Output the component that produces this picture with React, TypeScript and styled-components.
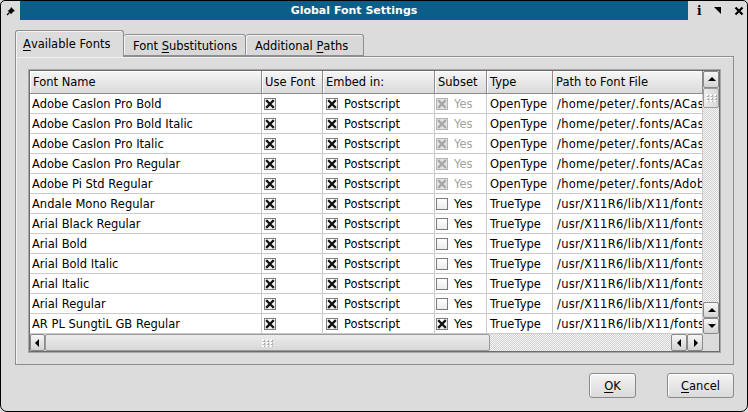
import React from 'react';
import styled, { createGlobalStyle } from 'styled-components';

const Global = createGlobalStyle`
  html, body { margin: 0; padding: 0; background: #dcdcdc; }
  body { font-family: "DejaVu Sans", "Liberation Sans", sans-serif; font-size: 11.5px; color: #000; }
  * { box-sizing: border-box; }
`;

const Window = styled.div`
  width: 748px;
  height: 412px;
  border: 1px solid #000;
  border-radius: 5px 5px 7px 7px;
  background: #dcdcdc;
  display: flex;
  flex-direction: column;
  overflow: hidden;
`;

const TitleBar = styled.div`
  height: 19px;
  display: flex;
  flex: none;
`;

const PinArea = styled.div`
  width: 19px;
  display: flex;
  align-items: center;
  justify-content: center;
`;

const TitleFill = styled.div`
  flex: 1;
  background: #0b5e87;
  color: #fff;
  font-weight: bold;
  font-size: 11px;
  display: flex;
  align-items: center;
  justify-content: center;
`;

const TitleButtons = styled.div`
  width: 59px;
  display: flex;
  align-items: center;
  justify-content: space-between;
  padding: 0 3px 0 9px;
`;

const InfoGlyph = styled.span`
  font-family: "DejaVu Serif", serif;
  font-weight: bold;
  font-size: 12px;
  line-height: 1;
`;

const Body = styled.div`
  flex: 1;
  display: flex;
  flex-direction: column;
  padding: 10px 13px 0 14px;
`;

const TabBar = styled.div`
  height: 26px;
  display: flex;
  align-items: flex-end;
  position: relative;
  z-index: 1;
`;

const Tab = styled.div<{ $active?: boolean; $w: number }>`
  width: ${(p) => p.$w}px;
  height: ${(p) => (p.$active ? 27 : 22)}px;
  margin-bottom: ${(p) => (p.$active ? -1 : 0)}px;
  border: 1px solid #8e8e8e;
  border-bottom: ${(p) => (p.$active ? 'none' : '1px solid #8e8e8e')};
  border-left: ${(p) => (p.$active ? '1px solid #8e8e8e' : 'none')};
  border-radius: 3px 3px 0 0;
  background: ${(p) => (p.$active ? '#dcdcdc' : '#d8d8d8')};
  box-shadow: inset 1px 1px 0 #f4f4f4;
  display: flex;
  align-items: center;
  padding-left: ${(p) => (p.$active ? 7 : 9)}px;
  padding-top: ${(p) => (p.$active ? 0 : 1)}px;
  white-space: nowrap;
`;

const Panel = styled.div`
  height: 309px;
  border: 1px solid #8e8e8e;
  box-shadow: inset 1px 1px 0 #f2f2f2;
  padding: 12px;
`;

const Frame = styled.div`
  width: 693px;
  height: 284px;
  border: 1px solid #a8a8a8;
  display: flex;
`;

const FrameInner = styled.div`
  flex: 1;
  border: 1px solid #6c6c6c;
  display: grid;
  grid-template-columns: 673px 16px;
  grid-template-rows: 263px 17px;
  background: #fff;
`;

const Table = styled.div`
  display: grid;
  grid-template-columns: 232px 61px 112px 52px 66px 150px;
  grid-auto-rows: 20px;
  grid-template-rows: 23px;
  overflow: hidden;
`;

const HeadCell = styled.div`
  height: 23px;
  background: linear-gradient(#f6f6f6, #dadada);
  border-right: 1px solid #8c8c8c;
  border-bottom: 1px solid #8c8c8c;
  box-shadow: inset 1px 1px 0 #fff;
  display: flex;
  align-items: center;
  padding-left: 3px;
  white-space: nowrap;
  overflow: hidden;
`;

const Cell = styled.div<{ $pad?: number; $dim?: boolean; $spaced?: boolean }>`
  height: 20px;
  border-right: 1px solid #cbcbcb;
  border-bottom: 1px solid #cbcbcb;
  display: flex;
  align-items: center;
  gap: 6px;
  padding-left: ${(p) => p.$pad ?? 2}px;
  padding-top: 1px;
  white-space: nowrap;
  overflow: hidden;
  letter-spacing: ${(p) => (p.$spaced ? '0.3px' : 'normal')};
  color: ${(p) => (p.$dim ? '#a2a2a2' : '#000')};
`;

const Box = styled.span<{ $disabled?: boolean }>`
  width: 12px;
  height: 12px;
  flex: none;
  border: 1px solid ${(p) => (p.$disabled ? '#b4b4b4' : '#7c7c7c')};
  background: ${(p) => (p.$disabled ? '#e2e2e2' : 'linear-gradient(#ffffff, #ececec)')};
  display: flex;
  align-items: center;
  justify-content: center;
  margin-top: -1px;
`;

const VScroll = styled.div`
  display: flex;
  flex-direction: column;
  background: #dcdcdc;
`;

const HScroll = styled.div`
  display: flex;
  background: #dcdcdc;
`;

const Corner = styled.div`
  background: #dcdcdc;
`;

const ArrowBtn = styled.div<{ $w: number; $h: number }>`
  width: ${(p) => p.$w}px;
  height: ${(p) => p.$h}px;
  flex: none;
  border: 1px solid #8a8a8a;
  border-radius: 2px;
  background: linear-gradient(#f6f6f6, #d4d4d4);
  display: flex;
  align-items: center;
  justify-content: center;
`;

const Thumb = styled.div<{ $w: number; $h: number }>`
  width: ${(p) => p.$w}px;
  height: ${(p) => p.$h}px;
  flex: none;
  border: 1px solid #9a9a9a;
  border-radius: 2px;
  background: linear-gradient(${(p) => (p.$h > p.$w ? '90deg, ' : '')}#ececec, #d8d8d8);
  display: flex;
  align-items: center;
  justify-content: center;
`;

const Grip = styled.div`
  width: 11px;
  height: 8px;
  background: radial-gradient(circle at 1px 1px, #ffffff 0.7px, transparent 0.8px) 0 0 / 4px 3px,
    radial-gradient(circle at 2px 2px, #a8a8a8 0.7px, transparent 0.8px) 0 0 / 4px 3px;
`;

const Track = styled.div`
  flex: 1;
  background: repeating-conic-gradient(#d2d2d2 0 25%, #f4f4f4 0 50%) 0 0 / 2px 2px;
`;

const Footer = styled.div`
  flex: 1;
  display: flex;
  justify-content: flex-end;
  align-items: flex-start;
  gap: 31px;
  padding-top: 8px;
`;

const Button = styled.div<{ $w: number }>`
  width: ${(p) => p.$w}px;
  height: 25px;
  border: 1px solid #8a8a8a;
  border-radius: 3px;
  background: linear-gradient(#f4f4f4, #dadada);
  box-shadow: inset 1px 1px 0 #fff;
  display: flex;
  align-items: center;
  justify-content: center;
`;

const U = styled.span`
  text-decoration: underline;
  text-underline-offset: 2px;
`;

const Arrow = ({ dir }: { dir: 'up' | 'down' | 'left' | 'right' }) => {
  const pts = {
    up: '1,6 5,2 9,6',
    down: '1,2 5,6 9,2',
    left: '6,1 2,5 6,9',
    right: '3,1 7,5 3,9',
  }[dir];
  return (
    <svg width="9" height="9" viewBox="0 0 9 9">
      <polygon points={pts} fill="#000" />
    </svg>
  );
};

const Check = ({ checked, disabled }: { checked?: boolean; disabled?: boolean }) => (
  <Box $disabled={disabled}>
    {checked && (
      <svg width="10" height="10" viewBox="0 0 10 10">
        <path
          d="M2 2 L8 8 M8 2 L2 8"
          stroke={disabled ? '#a6a6a6' : '#111'}
          strokeWidth="2.3"
          strokeLinecap="square"
        />
      </svg>
    )}
  </Box>
);

type Row = {
  name: string;
  type: string;
  path: string;
  subsetChecked: boolean;
  subsetDisabled: boolean;
};

const adobe = (name: string, path: string): Row => ({
  name,
  type: 'OpenType',
  path,
  subsetChecked: true,
  subsetDisabled: true,
});
const tt = (name: string, checked = false): Row => ({
  name,
  type: 'TrueType',
  path: '/usr/X11R6/lib/X11/fonts/truetype/',
  subsetChecked: checked,
  subsetDisabled: false,
});

const rows: Row[] = [
  adobe('Adobe Caslon Pro Bold', '/home/peter/.fonts/ACaslonPro-Bold.otf'),
  adobe('Adobe Caslon Pro Bold Italic', '/home/peter/.fonts/ACaslonPro-BoldItalic.otf'),
  adobe('Adobe Caslon Pro Italic', '/home/peter/.fonts/ACaslonPro-Italic.otf'),
  adobe('Adobe Caslon Pro Regular', '/home/peter/.fonts/ACaslonPro-Regular.otf'),
  adobe('Adobe Pi Std Regular', '/home/peter/.fonts/AdobePiStd.otf'),
  tt('Andale Mono Regular'),
  tt('Arial Black Regular'),
  tt('Arial Bold'),
  tt('Arial Bold Italic'),
  tt('Arial Italic'),
  tt('Arial Regular'),
  tt('AR PL SungtiL GB Regular', true),
];

const headers = ['Font Name', 'Use Font', 'Embed in:', 'Subset', 'Type', 'Path to Font File'];

export default function App() {
  return (
    <>
      <Global />
      <Window>
        <TitleBar>
          <PinArea>
            <svg width="10" height="10" viewBox="0 0 10 10">
              <path d="M5 1 L9 5 L7.5 5.5 L5.5 7.5 L5.5 8.5 L1.5 4.5 L2.5 4.5 L4.5 2.5 Z" fill="#000" />
              <path d="M3.5 6.5 L1 9" stroke="#000" strokeWidth="1.2" />
            </svg>
          </PinArea>
          <TitleFill>Global Font Settings</TitleFill>
          <TitleButtons>
            <InfoGlyph>i</InfoGlyph>
            <svg width="9" height="9" viewBox="0 0 9 9">
              <polygon points="1,1 8,1 8,8" fill="#000" />
            </svg>
            <svg width="10" height="10" viewBox="0 0 10 10">
              <path d="M1.5 1.5 L8.5 8.5 M8.5 1.5 L1.5 8.5" stroke="#000" strokeWidth="2.2" />
            </svg>
          </TitleButtons>
        </TitleBar>
        <Body>
          <TabBar>
            <Tab $active $w={109}>
              <U>A</U>vailable Fonts
            </Tab>
            <Tab $w={122}>
              Font&nbsp;<U>S</U>ubstitutions
            </Tab>
            <Tab $w={118}>
              Additional&nbsp;<U>P</U>aths
            </Tab>
          </TabBar>
          <Panel>
            <Frame>
              <FrameInner>
                <Table>
                  {headers.map((h) => (
                    <HeadCell key={h}>{h}</HeadCell>
                  ))}
                  {rows.map((r) => (
                    <React.Fragment key={r.name}>
                      <Cell $pad={2}>{r.name}</Cell>
                      <Cell $pad={2}>
                        <Check checked />
                      </Cell>
                      <Cell $pad={3}>
                        <Check checked />
                        Postscript
                      </Cell>
                      <Cell $pad={1} $dim={r.subsetDisabled}>
                        <Check checked={r.subsetChecked} disabled={r.subsetDisabled} />
                        Yes
                      </Cell>
                      <Cell $pad={3}>{r.type}</Cell>
                      <Cell $pad={4} $spaced>
                        {r.path}
                      </Cell>
                    </React.Fragment>
                  ))}
                </Table>
                <VScroll>
                  <ArrowBtn $w={16} $h={17}>
                    <Arrow dir="up" />
                  </ArrowBtn>
                  <Thumb $w={16} $h={20}>
                    <Grip />
                  </Thumb>
                  <Track />
                  <ArrowBtn $w={16} $h={16}>
                    <Arrow dir="up" />
                  </ArrowBtn>
                  <ArrowBtn $w={16} $h={16}>
                    <Arrow dir="down" />
                  </ArrowBtn>
                </VScroll>
                <HScroll>
                  <ArrowBtn $w={15} $h={17}>
                    <Arrow dir="left" />
                  </ArrowBtn>
                  <Thumb $w={445} $h={17}>
                    <Grip />
                  </Thumb>
                  <Track />
                  <ArrowBtn $w={16} $h={17}>
                    <Arrow dir="left" />
                  </ArrowBtn>
                  <ArrowBtn $w={16} $h={17}>
                    <Arrow dir="right" />
                  </ArrowBtn>
                </HScroll>
                <Corner />
              </FrameInner>
            </Frame>
          </Panel>
          <Footer>
            <Button $w={47}>
              <U>O</U>K
            </Button>
            <Button $w={67}>
              <U>C</U>ancel
            </Button>
          </Footer>
        </Body>
      </Window>
    </>
  );
}
